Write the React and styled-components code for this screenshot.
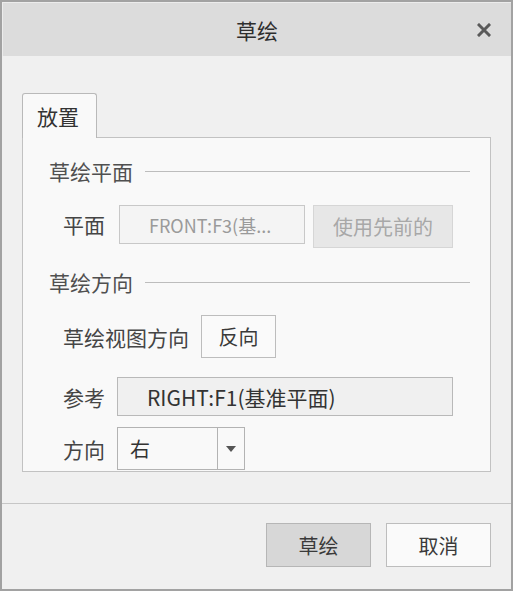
import React from "react";
import styled, { createGlobalStyle } from "styled-components";

const Global = createGlobalStyle`
  html, body { margin: 0; padding: 0; background: #f0f0f0; }
  * { box-sizing: border-box; }
  body { font-family: "Noto Sans CJK SC", "Noto Sans", sans-serif; }
  svg { display: block; }
`;

const Dialog = styled.div`
  width: 513px;
  height: 591px;
  border: 2px solid #a2a2a2;
  background: #f0f0f0;
  display: flex;
  flex-direction: column;
`;

const TitleBar = styled.div`
  height: 54px;
  background: #dcdcdc;
  border-top: 1px solid #ececec;
  border-left: 1px solid #ececec;
  display: flex;
  align-items: center;
  justify-content: center;
  position: relative;
  font-size: 21px;
  color: #2e2e2e;
`;

const Close = styled.div`
  position: absolute;
  right: 20px;
  top: 20px;
  width: 14px;
  height: 14px;
`;

const Body = styled.div`
  padding: 37px 20px 0 20px;
  display: flex;
  flex-direction: column;
`;

const Tab = styled.div`
  width: 75px;
  height: 45px;
  border: 1px solid #b9b9b9;
  border-bottom: none;
  border-radius: 3px 3px 0 0;
  background: #f9f9f9;
  font-size: 21px;
  color: #333;
  display: flex;
  align-items: center;
  padding-left: 14px;
  margin-bottom: -1px;
  position: relative;
  z-index: 1;
`;

const Panel = styled.div`
  height: 335px;
  border: 1px solid #c2c2c2;
  background: #f9f9f9;
  padding: 18px 20px 0 26px;
  display: flex;
  flex-direction: column;
`;

const Heading = styled.div`
  height: 30px;
  display: flex;
  align-items: center;
  font-size: 21px;
  color: #505050;
  margin-top: ${(p) => p.$mt || 0}px;
  &::after {
    content: "";
    flex: 1;
    height: 1px;
    background: #bdbdbd;
    margin-left: 12px;
  }
`;

const Row = styled.div`
  display: flex;
  align-items: ${(p) => p.$align || "center"};
  height: ${(p) => p.$h}px;
  margin-top: ${(p) => p.$mt}px;
  padding-left: 14px;
`;

const Label = styled.div`
  font-size: 21px;
  color: #454545;
  margin-right: ${(p) => p.$gap || 12}px;
  line-height: ${(p) => (p.$lh ? p.$lh + "px" : "normal")};
`;

const Field = styled.div`
  width: ${(p) => p.$w}px;
  height: 39px;
  border: 1px solid ${(p) => (p.$disabled ? "#c8c8c8" : "#b9b9b9")};
  background: ${(p) => (p.$disabled ? "#f4f4f4" : "#f0f0f0")};
  color: ${(p) => (p.$disabled ? "#9a9a9a" : "#333")};
  font-size: ${(p) => p.$fs || 19}px;
  display: flex;
  align-items: center;
  padding-left: 29px;
  white-space: nowrap;
  overflow: hidden;
`;

const Button = styled.button`
  font-family: inherit;
  width: ${(p) => p.$w}px;
  height: ${(p) => p.$h || 43}px;
  font-size: 20px;
  border: 1px solid ${(p) => (p.$disabled ? "#d6d6d6" : p.$primary ? "#b6b6b6" : "#bdbdbd")};
  background: ${(p) => (p.$disabled ? "#e7e7e7" : p.$primary ? "#d7d7d7" : "#fafafa")};
  color: ${(p) => (p.$disabled ? "#a8a8a8" : "#3a3a3a")};
  padding: 0;
  margin-left: ${(p) => p.$ml || 0}px;
  display: flex;
  align-items: center;
  justify-content: center;
`;

const Select = styled.div`
  width: 128px;
  height: 43px;
  border: 1px solid #b3b3b3;
  background: #f9f9f9;
  display: flex;
  font-size: 20px;
  color: #333;
`;

const SelectValue = styled.div`
  flex: 1;
  display: flex;
  align-items: center;
  padding-left: 12px;
  border-right: 1px solid #b3b3b3;
`;

const SelectArrow = styled.div`
  width: 26px;
  display: flex;
  align-items: center;
  justify-content: center;
`;

const Footer = styled.div`
  margin-top: 31px;
  border-top: 1px solid #c6c6c6;
  padding: 19px 20px 0 0;
  display: flex;
  justify-content: flex-end;
  gap: 15px;
`;

export default function App() {
  return (
    <>
      <Global />
      <Dialog>
        <TitleBar>
          草绘
          <Close>
            <svg width="14" height="14" viewBox="0 0 14 14">
              <path d="M2 2 L12 12 M12 2 L2 12" stroke="#5a5a5a" strokeWidth="3" strokeLinecap="square" />
            </svg>
          </Close>
        </TitleBar>
        <Body>
          <Tab>放置</Tab>
          <Panel>
            <Heading>草绘平面</Heading>
            <Row $h={43} $mt={19} $align="flex-start">
              <Label $gap={14} $lh={39}>平面</Label>
              <Field $w={186} $fs={18} $disabled>FRONT:F3(基...</Field>
              <Button $w={140} $ml={8} $disabled>使用先前的</Button>
            </Row>
            <Heading $mt={19}>草绘方向</Heading>
            <Row $h={43} $mt={18}>
              <Label>草绘视图方向</Label>
              <Button $w={75}>反向</Button>
            </Row>
            <Row $h={39} $mt={19}>
              <Label>参考</Label>
              <Field $w={336} $fs={21}>RIGHT:F1(基准平面)</Field>
            </Row>
            <Row $h={43} $mt={11}>
              <Label>方向</Label>
              <Select>
                <SelectValue>右</SelectValue>
                <SelectArrow>
                  <svg width="10" height="6" viewBox="0 0 10 6">
                    <path d="M0 0 L10 0 L5 6 Z" fill="#555" />
                  </svg>
                </SelectArrow>
              </Select>
            </Row>
          </Panel>
        </Body>
        <Footer>
          <Button $w={105} $h={44} $primary>草绘</Button>
          <Button $w={105} $h={44}>取消</Button>
        </Footer>
      </Dialog>
    </>
  );
}
